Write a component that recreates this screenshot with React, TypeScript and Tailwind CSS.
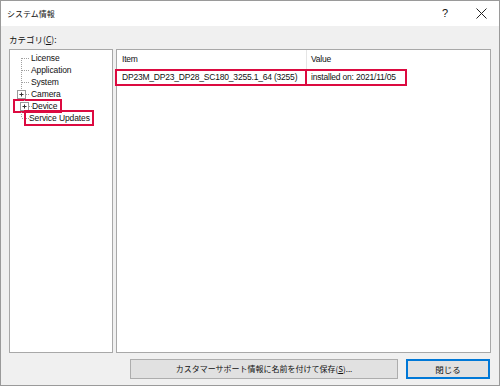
import React from "react";

const tree = [
  { label: "License", kind: "leaf" },
  { label: "Application", kind: "leaf" },
  { label: "System", kind: "leaf" },
  { label: "Camera", kind: "plus" },
  { label: "Device", kind: "plus", mark: true },
  { label: "Service Updates", kind: "last", mark: true },
];

const ui = { fontFamily: '"Liberation Sans", "Noto Sans CJK JP", sans-serif' };
const jp = { fontFamily: '"Noto Sans CJK JP", sans-serif' };

const Connector = ({ kind }: { kind: string }) => (
  <svg width="20" height="12" className="shrink-0">
    <line x1="11.5" y1={kind === "first" ? 6 : 0} x2="11.5" y2={kind === "last" ? 6 : 12} stroke="#a0a0a0" strokeDasharray="1 1" />
    <line x1="12" y1="6.5" x2="19" y2="6.5" stroke="#a0a0a0" strokeDasharray="1 1" />
    {kind === "plus" && (
      <g>
        <rect x="7.5" y="2.5" width="8" height="8" fill="#fff" stroke="#9a9a9a" />
        <line x1="9.5" y1="6.5" x2="13.5" y2="6.5" stroke="#333" />
        <line x1="11.5" y1="4.5" x2="11.5" y2="8.5" stroke="#333" />
      </g>
    )}
  </svg>
);

export default function App() {
  return (
    <div className="w-[500px] h-[386px] bg-[#f0f0f0] border border-[#9a9a9a] flex flex-col text-[#111]" style={ui}>
      <div className="h-[25px] bg-white flex items-center justify-between pl-[6px] pr-[12px] shrink-0">
        <span className="text-[8px]" style={jp}>システム情報</span>
        <div className="flex items-center gap-[28px] text-[11px]">
          <span>?</span>
          <svg width="11" height="11" viewBox="0 0 11 11">
            <path d="M0.5 0.5L10.5 10.5M10.5 0.5L0.5 10.5" stroke="#222" strokeWidth="1" />
          </svg>
        </div>
      </div>

      <div className="flex-1 flex flex-col px-[8px]">
        <div className="h-[23px] flex items-end pb-[3px] text-[8.5px]" style={jp}>
          カテゴリ(<span className="underline">C</span>):
        </div>

        <div className="flex gap-[3px] h-[304px]">
          <div className="w-[104px] bg-white border border-[#a8a8a8] pt-[2px] text-[8.5px] tracking-[-0.1px] leading-[12px] whitespace-nowrap">
            {tree.map((t) => (
              <div key={t.label} className="flex items-center h-[12px]">
                {t.label === "Device" ? (
                  <div className="flex items-center ml-[3px] pr-[3px] border-2 border-[#dc0a40] h-[14px]">
                    <div className="-ml-[2px]"><Connector kind="plus" /></div>
                    <span className="-ml-[1px]">{t.label}</span>
                  </div>
                ) : t.label === "Service Updates" ? (
                  <div className="flex items-center">
                    <Connector kind="last" />
                    <span className="border-2 border-[#dc0a40] h-[16px] -ml-[6px] pl-[3px] pr-[2px] leading-[12px]">{t.label}</span>
                  </div>
                ) : (
                  <>
                    <Connector kind={t.label === "License" ? "first" : t.kind} />
                    <span className="ml-[1px]">{t.label}</span>
                  </>
                )}
              </div>
            ))}
          </div>

          <div className="flex-1 bg-white border border-[#a8a8a8] text-[8.5px] tracking-[-0.2px] whitespace-nowrap">
            <div className="flex h-[19px] items-center">
              <div className="w-[190px] h-full pl-[5px] flex items-center border-r border-[#e5e5e5]">Item</div>
              <div className="flex-1 pl-[4px]">Value</div>
            </div>
            <div className="flex h-[17px] items-center">
              <div className="w-[192px] -ml-[2px] h-full border-2 border-[#dc0a40] pl-[5px] flex items-center">
                DP23M_DP23_DP28_SC180_3255.1_64 (3255)
              </div>
              <div className="w-[100px] h-full border-2 border-l-0 border-[#dc0a40] pl-[4px] flex items-center">
                installed on: 2021/11/05
              </div>
            </div>
          </div>
        </div>

        <div className="flex justify-end gap-[8px] mt-[6px] pr-[1px]">
          <button className="w-[268px] h-[20px] bg-[#e1e1e1] border border-[#adadad] text-[8px] whitespace-nowrap" style={jp}>
            カスタマーサポート情報に名前を付けて保存(<span className="underline">S</span>)...
          </button>
          <button className="w-[84px] h-[20px] bg-[#e1e1e1] border-2 border-[#0078d7] text-[8.5px]" style={jp}>
            閉じる
          </button>
        </div>
      </div>
    </div>
  );
}
